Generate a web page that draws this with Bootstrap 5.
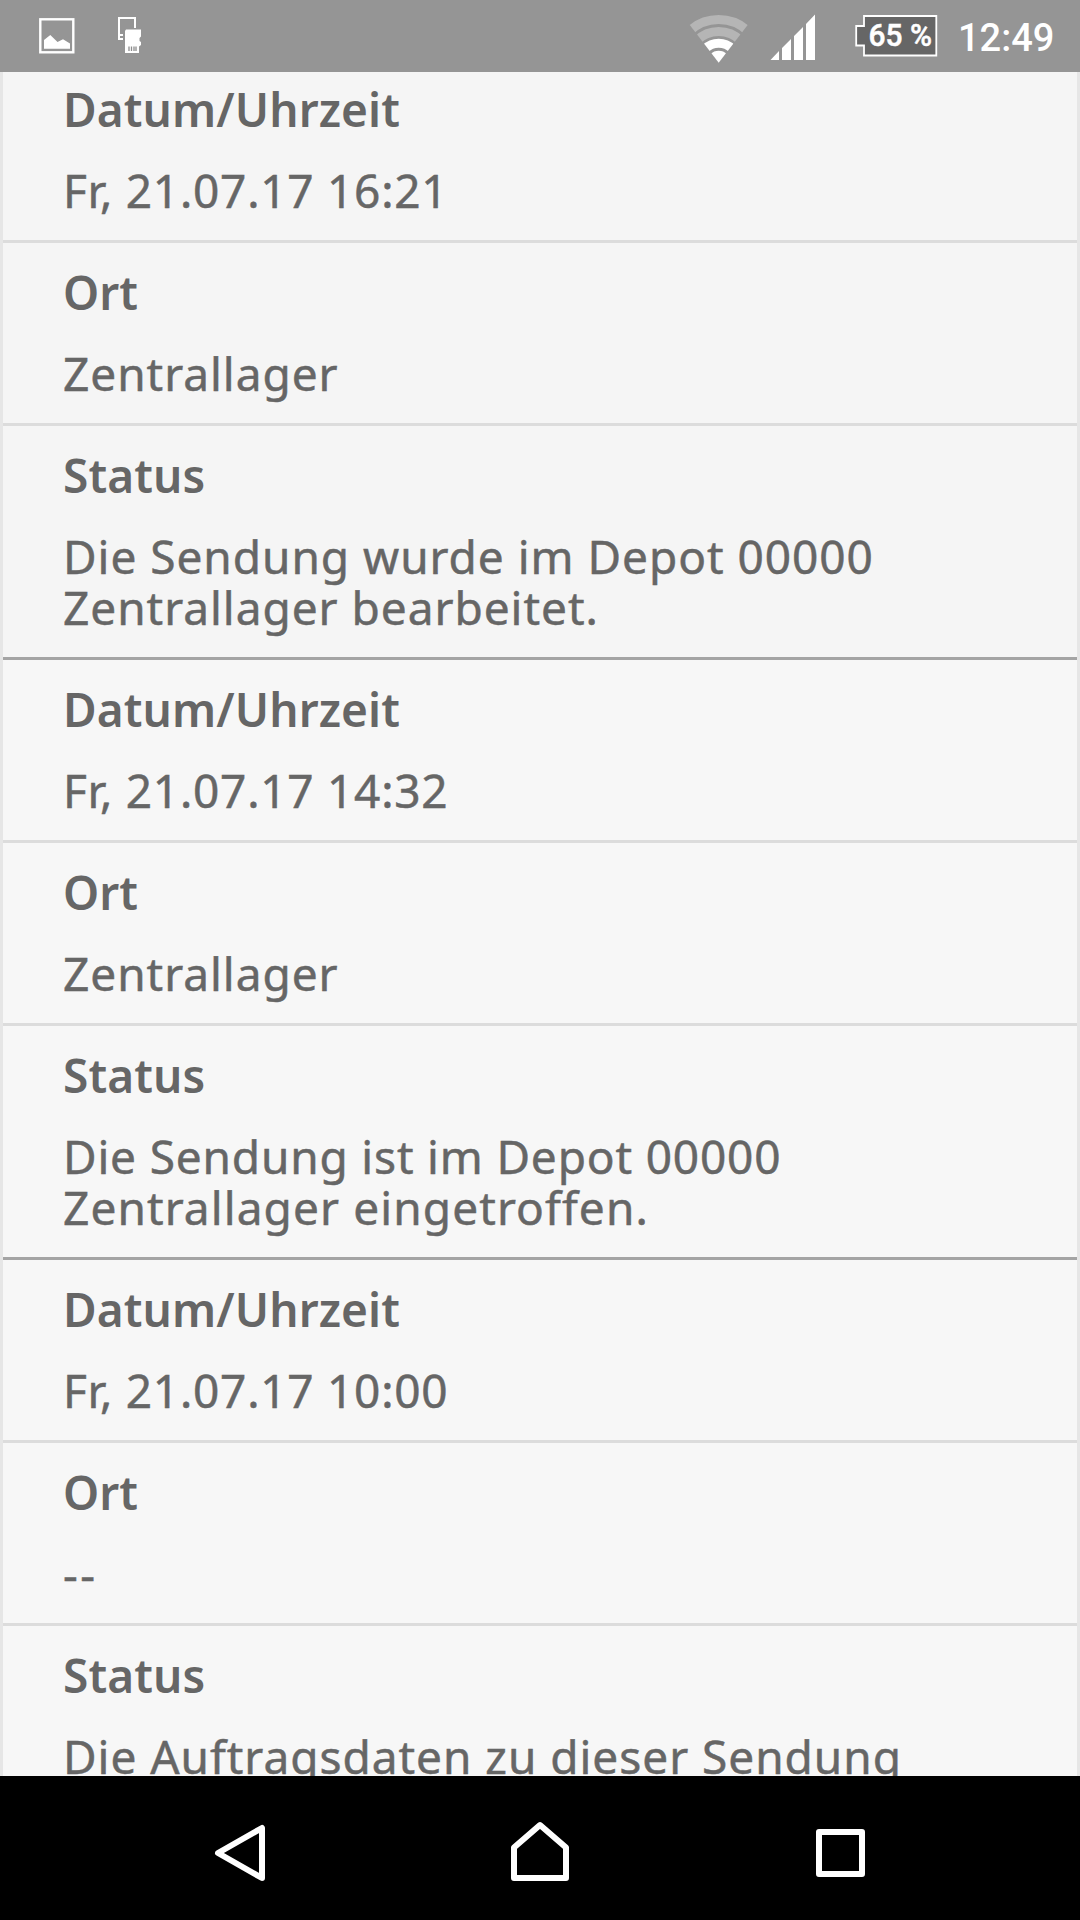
<!DOCTYPE html>
<html lang="de">
<head>
<meta charset="utf-8">
<meta name="viewport" content="width=device-width, initial-scale=1">
<title>Sendungsverlauf</title>
<link rel="stylesheet" href="https://cdn.jsdelivr.net/npm/bootstrap@5.3.0/dist/css/bootstrap.min.css">
<style>
  body { font-family: "Noto Sans", "Open Sans", sans-serif; color: #666; background: #f7f7f7; }
  .screen { height: 1920px; width: 1080px; }
  .status-strip { height: 72px; background: #959595; color: #fff; font-family: Roboto, sans-serif; font-weight: 500; padding: 0 24px 0 39px; }
  .status-strip svg { height: 72px; display: block; flex: none; }
  .notices { gap: 42px; }
  .signal { margin-left: 21px; }
  .battery { margin-left: 38px; }
  .clock { font-size: 38px; line-height: 72px; width: 98px; margin-left: 20px; padding-top: 2px; white-space: nowrap; }
  .history { border: solid #e6e6e6; border-width: 0 3px; min-height: 0; }
  .event { background: #f7f7f7; border-bottom: 3px solid #a4a4a4; }
  .event.newest { background: #f5f5f5; }
  .entry { padding: 24px 0 24px 60px; font-size: 46px; line-height: 51px; border-bottom: 3px solid #dcdcdc; }
  .entry:last-child { border-bottom: 0; }
  .newest .entry:first-child { padding-top: 12px; }
  .entry dt { font-weight: 600; letter-spacing: .1px; margin-bottom: 30px; line-height: 51px; }
  .entry dd { letter-spacing: .97px; white-space: nowrap; -webkit-text-stroke: .5px #666; }
  .entry dd.stamp { letter-spacing: .75px; }
  .entry dd.none { letter-spacing: 2.5px; }
  .tight { letter-spacing: .83px; }
  .loose { letter-spacing: 1.1px; }
  .nav-strip { height: 144px; background: #000; }
  .nav-strip svg { fill: none; stroke: #fff; stroke-width: 6; stroke-linejoin: round; }
</style>
<script src="https://cdn.jsdelivr.net/npm/bootstrap@5.3.0/dist/js/bootstrap.bundle.min.js"></script>
</head>
<body>
<div class="screen d-flex flex-column overflow-hidden">
  <header class="status-strip d-flex align-items-start justify-content-between flex-shrink-0">
    <div class="d-flex notices">
      <svg width="36" viewBox="39 0 36 72" fill="#fff"><rect x="40.300" y="19.300" width="33" height="33" fill="none" stroke="#fff" stroke-width="2.400"/><path d="M44 48.700V40l6.300-5 7.200 7 5.500-2.800 7 4.200v5.300z"/></svg>
      <svg width="26" viewBox="117 0 26 72"><path d="M135 28V18h-16v21h4M119 35h4" fill="none" stroke="#fff" stroke-width="2"/><path d="M126 29.500h15v7l-1.500 1.500v3l1.500 1v3l-2 1.500v6.500h-14V31z" fill="#fff"/><path d="M129 46.500v4.500M131.500 46.500v4.500M134 46.500v4.500M136 46.500v4.500" stroke="#8c8c8c" stroke-width="1.300"/></svg>
    </div>
    <div class="d-flex">
      <svg width="60" viewBox="689 0 60 72">
        <clipPath id="fan"><path d="M718.700 62.700L682.500 15.500V0h72.400v15.500z"/></clipPath>
        <g clip-path="url(#fan)" fill="none" stroke-width="9">
          <circle cx="718.700" cy="62.500" r="43" stroke="#b5b5b5"/>
          <circle cx="718.700" cy="62.500" r="31" stroke="#b5b5b5"/>
          <circle cx="718.700" cy="62.500" r="19.300" stroke="#fff"/>
          <circle cx="718.700" cy="62.500" r="11.700" fill="#fff"/>
        </g>
      </svg>
      <svg class="signal" width="46" viewBox="770 0 46 72" fill="#fff"><path d="M770.500 60l8.500-9v9zM782 60V48l9-9v21zM794 60V36l9-9v33zM806 60V24l9-9.500V60z"/></svg>
      <svg class="battery" width="84" viewBox="854 0 84 72"><path d="M864 16h72.300v39.500H864v-10h-7.800v-19.500h7.800z" fill="#666" stroke="#fff" stroke-width="1.800"/><text x="868.500" y="46.300" font-size="31" fill="#fff" stroke="#fff" stroke-width=".5" textLength="63.500" lengthAdjust="spacingAndGlyphs">65 %</text></svg>
      <div class="clock">12:49</div>
    </div>
  </header>

  <main class="history flex-grow-1 overflow-hidden">
    <section class="event newest">
      <dl class="entry mb-0"><dt>Datum/Uhrzeit</dt><dd class="mb-0 stamp">Fr, 21.07.17 16:21</dd></dl>
      <dl class="entry mb-0"><dt>Ort</dt><dd class="mb-0">Zentrallager</dd></dl>
      <dl class="entry mb-0"><dt>Status</dt><dd class="mb-0">Die Sendung wurde im Depot 00000<br>Zentrallager bearbeitet.</dd></dl>
    </section>
    <section class="event">
      <dl class="entry mb-0"><dt>Datum/Uhrzeit</dt><dd class="mb-0 stamp">Fr, 21.07.17 14:32</dd></dl>
      <dl class="entry mb-0"><dt>Ort</dt><dd class="mb-0">Zentrallager</dd></dl>
      <dl class="entry mb-0"><dt>Status</dt><dd class="mb-0"><span class="tight">Die Sendung ist im Depot 00000</span><br><span class="loose">Zentrallager eingetroffen.</span></dd></dl>
    </section>
    <section class="event">
      <dl class="entry mb-0"><dt>Datum/Uhrzeit</dt><dd class="mb-0 stamp">Fr, 21.07.17 10:00</dd></dl>
      <dl class="entry mb-0"><dt>Ort</dt><dd class="mb-0 none">--</dd></dl>
      <dl class="entry mb-0"><dt>Status</dt><dd class="mb-0">Die Auftragsdaten zu dieser Sendung</dd></dl>
    </section>
  </main>

  <footer class="nav-strip d-flex justify-content-center align-items-center flex-shrink-0">
    <svg width="300" height="144" viewBox="90 1776 300 144"><path d="M218 1853l44-25v50z"/></svg>
    <svg width="300" height="144" viewBox="390 1776 300 144"><path d="M514 1878v-30.500l26-22.500 26 22.500v30.500z"/></svg>
    <svg width="300" height="144" viewBox="690 1776 300 144"><path d="M819 1832h43v42h-43z"/></svg>
  </footer>
</div>
</body>
</html>
